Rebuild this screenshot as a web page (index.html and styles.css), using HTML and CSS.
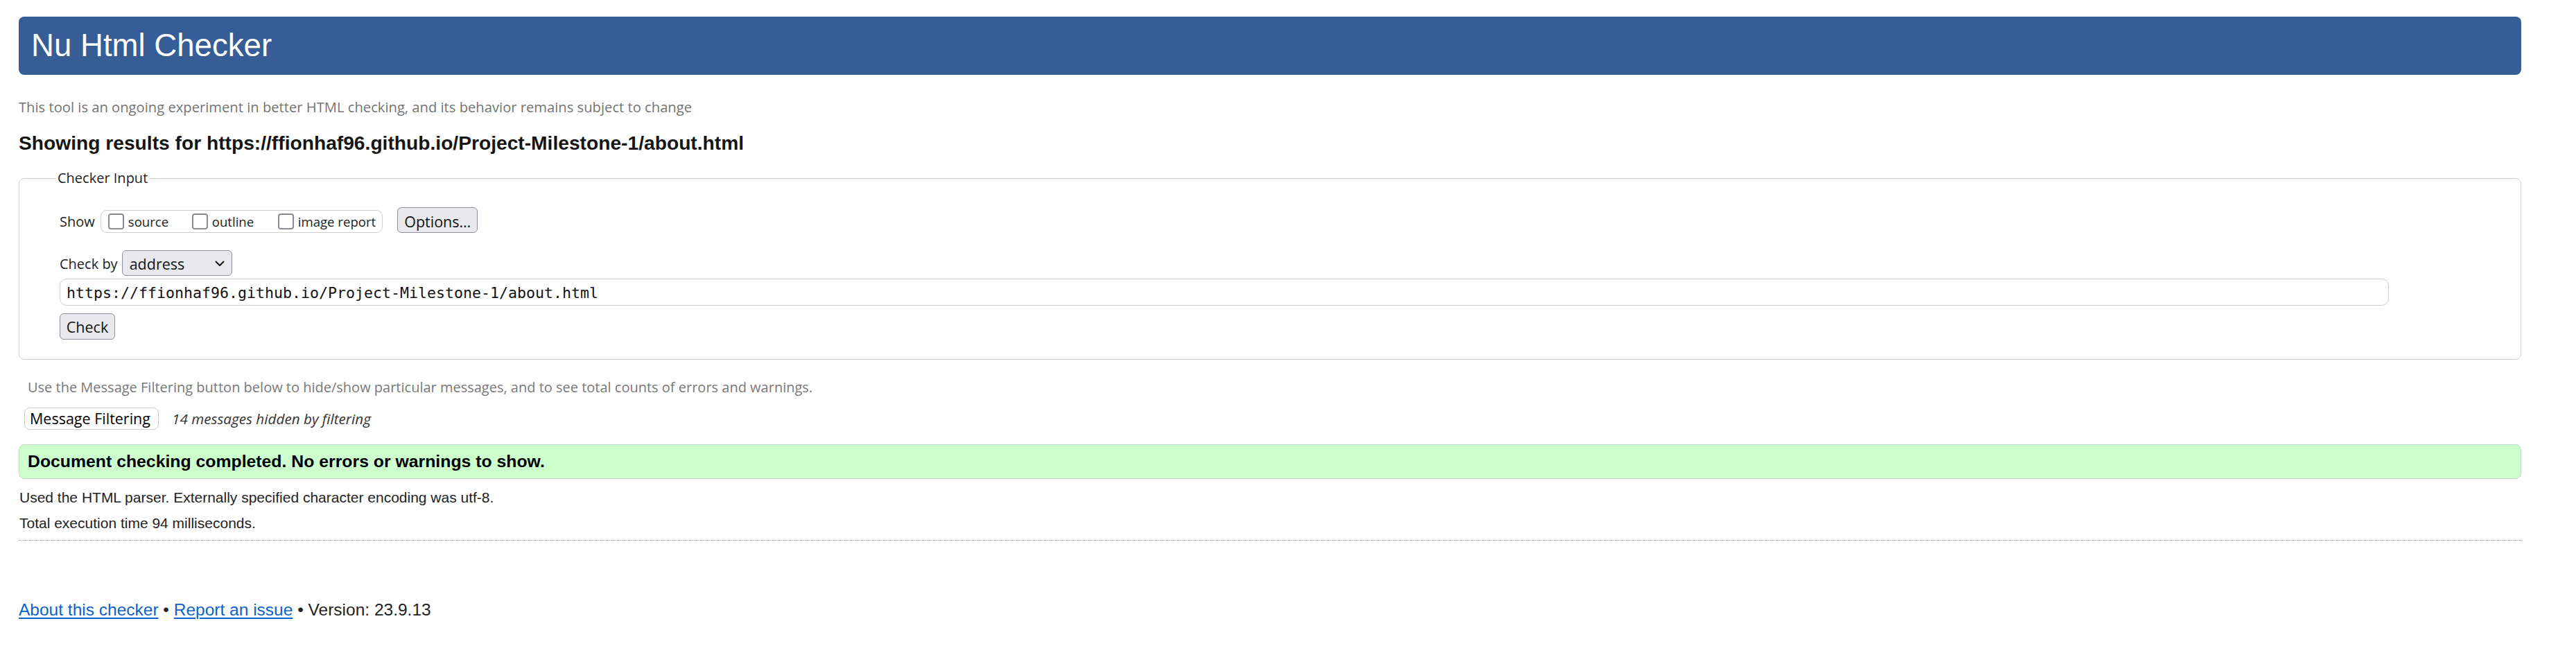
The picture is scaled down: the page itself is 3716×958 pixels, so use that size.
FILE: index.html
```html
<!DOCTYPE html>
<html lang="en">
<head>
<meta charset="utf-8">
<title>Showing results for https://ffionhaf96.github.io/Project-Milestone-1/about.html - Nu Html Checker</title>
<link rel="stylesheet" href="styles.css">
</head>
<body>
<h1 class="title">Nu Html Checker</h1>
<p class="intro">This tool is an ongoing experiment in better HTML checking, and its behavior remains subject to change</p>
<h2 class="results-heading">Showing results for https://ffionhaf96.github.io/Project-Milestone-1/about.html</h2>
<form class="checker-form">
  <fieldset class="checker-input">
    <legend class="legend">Checker Input</legend>
    <div class="show-row">
      <span class="row-label">Show</span>
      <span class="checkbox-group">
        <label class="cb-item cb-source"><input type="checkbox" class="cb"><span>source</span></label>
        <label class="cb-item cb-outline"><input type="checkbox" class="cb"><span>outline</span></label>
        <label class="cb-item cb-image"><input type="checkbox" class="cb"><span>image report</span></label>
      </span>
      <button type="button" class="btn options-btn">Options…</button>
    </div>
    <div class="checkby-row">
      <span class="row-label checkby-label">Check by</span>
      <span class="select-wrap">
        <select class="select"><option>address</option></select>
        <svg class="chevron" width="14" height="9" viewBox="0 0 14 9"><path d="M1.5 1.5 L7 7 L12.5 1.5" fill="none" stroke="#111" stroke-width="2" stroke-linecap="round" stroke-linejoin="round"/></svg>
      </span>
    </div>
    <input class="url-input" type="url" value="https://ffionhaf96.github.io/Project-Milestone-1/about.html">
    <div class="check-row"><button type="button" class="btn check-btn">Check</button></div>
  </fieldset>
</form>
<p class="filter-hint">Use the Message Filtering button below to hide/show particular messages, and to see total counts of errors and warnings.</p>
<div class="filter-row">
  <button type="button" class="filter-btn">Message Filtering</button>
  <span class="filter-count">14 messages hidden by filtering</span>
</div>
<p class="success">Document checking completed. No errors or warnings to show.</p>
<p class="details">Used the HTML parser. Externally specified character encoding was utf-8.</p>
<p class="details details-time">Total execution time 94 milliseconds.</p>
<hr class="divider">
<p class="footer"><a href="#" class="footer-link">About this checker</a> • <a href="#" class="footer-link">Report an issue</a> • Version: 23.9.13</p>
</body>
</html>
```
FILE: styles.css
```css
html, body {
  background: #fff;
}
body {
  margin: 0;
  padding: 24px 79px 40px 27px;
  font-family: "Liberation Sans", Arial, sans-serif;
  color: #222;
}

.title {
  margin: 0;
  height: 84px;
  line-height: 84px;
  padding-left: 18px;
  font-size: 45.6px;
  font-weight: normal;
  color: #fff;
  background: #365d95;
  border-radius: 8px;
}

.intro {
  margin: 31px 0 0;
  font-family: "Open Sans", "Noto Sans", sans-serif;
  font-size: 20.2px;
  line-height: 30px;
  color: #737373;
}

.results-heading {
  margin: 21px 0 0;
  font-size: 28.2px;
  line-height: 32px;
  font-weight: bold;
  color: #151515;
}

.checker-form {
  margin: 20px 0 0;
}

.checker-input {
  margin: 0;
  padding: 27px 20px 28px 58px;
  border: 1px solid #cfcfcf;
  border-radius: 8px;
  min-width: 0;
  font-family: "Open Sans", "Noto Sans", sans-serif;
}

.legend {
  margin-left: -5px;
  padding: 0 2px;
  font-size: 20px;
  line-height: 30px;
  color: #222;
}

.show-row,
.checkby-row {
  display: flex;
  align-items: flex-end;
}

.row-label {
  font-size: 20px;
  line-height: 33px;
  color: #222;
}

.show-row .row-label {
  margin-right: 8px;
}

.checkbox-group {
  display: inline-flex;
  align-items: center;
  height: 31px;
  padding: 0 9px 0 10px;
  border: 1px solid #cfcfcf;
  border-radius: 9px;
}

.cb-item {
  display: inline-flex;
  align-items: center;
  font-size: 18.6px;
  line-height: 31px;
  color: #222;
}

.cb-source { width: 121px; }
.cb-outline { width: 124px; }

.cb {
  appearance: none;
  -webkit-appearance: none;
  width: 23px;
  height: 23px;
  margin: 0 6px 0 0;
  border: 2.5px solid #8b8b95;
  border-radius: 4px;
  background: #fff;
}

.btn {
  font-family: "Open Sans", "Noto Sans", sans-serif;
  font-size: 21.5px;
  line-height: 29px;
  color: #111;
  background: #e9e9ed;
  border: 1px solid #8f8f9d;
  border-radius: 6px;
}

.options-btn {
  margin-left: 21px;
  height: 37px;
  width: 116px;
  padding: 5px 0 1px;
}

.checkby-row {
  margin-top: 25px;
}

.checkby-label {
  line-height: 34px;
  margin-right: 6px;
}

.select-wrap {
  position: relative;
  display: inline-block;
}

.select {
  appearance: none;
  -webkit-appearance: none;
  display: block;
  width: 159px;
  height: 37px;
  padding: 4px 0 2px 10px;
  font-family: "Open Sans", "Noto Sans", sans-serif;
  font-size: 21.5px;
  line-height: 29px;
  color: #111;
  background: #e9e9ed;
  border: 1px solid #8f8f9d;
  border-radius: 6px;
}

.chevron {
  position: absolute;
  left: 134px;
  top: 15px;
  pointer-events: none;
}

.url-input {
  display: block;
  box-sizing: border-box;
  margin-top: 4px;
  width: 3360px;
  height: 39px;
  padding: 2px 9px 0;
  font-family: "DejaVu Sans Mono", "Liberation Mono", monospace;
  font-size: 21.6px;
  color: #111;
  background: #fff;
  border: 1px solid #cfcfcf;
  border-radius: 10px;
  outline: none;
}

.check-row {
  margin-top: 11px;
}

.check-btn {
  display: block;
  width: 80px;
  height: 38px;
  padding: 4px 0 3px;
}

.filter-hint {
  margin: 27px 0 0;
  padding-left: 13px;
  font-family: "Open Sans", "Noto Sans", sans-serif;
  font-size: 20px;
  line-height: 26px;
  color: #787878;
}

.filter-row {
  display: flex;
  align-items: center;
  margin: 16px 0 0 8px;
}

.filter-btn {
  box-sizing: border-box;
  height: 32px;
  width: 194px;
  padding: 0 0 0 7px;
  text-align: left;
  font-family: "Open Sans", "Noto Sans", sans-serif;
  font-size: 21.5px;
  line-height: 30px;
  color: #000;
  background: #fff;
  border: 1px solid #cfcfcf;
  border-radius: 8px;
}

.filter-count {
  margin-left: 19px;
  font-family: "Open Sans", "Noto Sans", sans-serif;
  font-style: italic;
  font-size: 20.7px;
  line-height: 30px;
  color: #333;
}

.success {
  margin: 21px 0 0;
  height: 48px;
  padding-left: 12px;
  font-size: 24.8px;
  line-height: 48px;
  font-weight: bold;
  color: #000;
  background: #ccffcc;
  border: 1px solid #c4d8c4;
  border-radius: 8px;
}

.details {
  margin: 14px 0 0 1px;
  font-size: 21px;
  line-height: 26px;
  color: #222;
}

.details-time {
  margin-top: 11px;
}

.divider {
  margin: 11px 0 0;
  height: 0;
  border: 0;
  border-top: 1px dotted #9a9a9a;
}

.footer {
  margin: 85px 0 0;
  font-size: 24.5px;
  line-height: 30px;
  color: #222;
}

.footer-link {
  color: #0b63c8;
  text-decoration: underline;
  text-decoration-thickness: 2px;
  text-underline-offset: 3px;
}
```
